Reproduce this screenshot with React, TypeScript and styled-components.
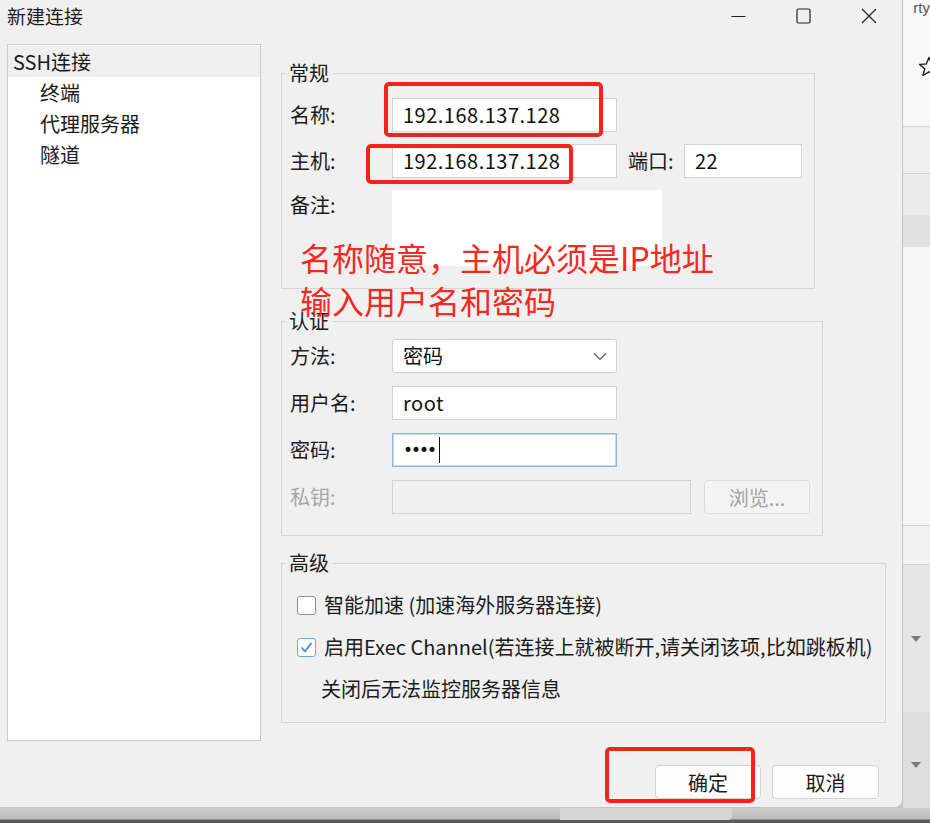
import React from "react";
import styled, { createGlobalStyle } from "styled-components";

const FONT = `"Noto Sans CJK SC", "Microsoft YaHei", "Noto Sans", sans-serif`;

const Global = createGlobalStyle`
  html, body { margin: 0; padding: 0; }
  body {
    width: 930px;
    height: 823px;
    overflow: hidden;
    background: #c4c4c4;
    font-family: ${FONT};
  }
  * { box-sizing: border-box; }
`;

const Page = styled.div`
  display: grid;
  grid-template-columns: 903px 27px;
  grid-template-rows: 808px 15px;
  width: 930px;
  height: 823px;
  background: #c6c6c6;
`;

/* ---------- dialog ---------- */

const Dialog = styled.div`
  position: relative;
  display: flex;
  flex-direction: column;
  background: #f0f0f0;
  border-right: 1px solid #c2c2c2;
  border-bottom: 1px solid #c2c2c2;
  border-bottom-right-radius: 8px;
  color: #1b1b1b;
`;

const TitleBar = styled.div`
  display: flex;
  align-items: center;
  justify-content: space-between;
  height: 32px;
  padding-left: 7px;
`;

const Title = styled.span`
  font-size: 19px;
  line-height: 32px;
  color: #1b1b1b;
`;

const WinControls = styled.div`
  display: flex;
  align-self: stretch;
`;

const WinButton = styled.div<{ $w: number }>`
  width: ${(p) => p.$w}px;
  display: flex;
  align-items: center;
  justify-content: center;
`;

const Body = styled.div`
  display: flex;
  align-items: flex-start;
  padding: 12px 0 0 7px;
`;

const Tree = styled.div`
  width: 254px;
  height: 697px;
  flex: none;
  background: #ffffff;
  border: 1px solid #cbcbcb;
  padding-top: 1px;
`;

const TreeItem = styled.div<{ $indent: number; $selected?: boolean }>`
  height: 31px;
  line-height: 31px;
  padding-left: ${(p) => p.$indent}px;
  font-size: 20px;
  color: #1b1b1b;
  background: ${(p) => (p.$selected ? "#efefef" : "transparent")};
`;

const Main = styled.div`
  position: relative;
  display: flex;
  flex-direction: column;
  margin-left: 20px;
  padding-top: 18px;
`;

const Group = styled.fieldset<{ $w: number; $h: number; $mt: number; $pt: number; $gap: number }>`
  margin: ${(p) => p.$mt}px 0 0 0;
  width: ${(p) => p.$w}px;
  height: ${(p) => p.$h}px;
  min-width: 0;
  border: 1px solid #d6d6d6;
  padding: ${(p) => p.$pt}px 8px 0 8px;
  display: flex;
  flex-direction: column;
  gap: ${(p) => p.$gap}px;
`;

const Legend = styled.legend`
  font-size: 20px;
  line-height: 22px;
  padding: 0 4px;
  margin-left: -5px;
  color: #1b1b1b;
`;

const Row = styled.div<{ $top?: boolean }>`
  display: flex;
  align-items: ${(p) => (p.$top ? "flex-start" : "center")};
`;

const FieldLabel = styled.span<{ $w?: number; $disabled?: boolean; $ml?: number }>`
  width: ${(p) => p.$w ?? 102}px;
  margin-left: ${(p) => p.$ml ?? 0}px;
  flex: none;
  font-size: 20px;
  line-height: 30px;
  color: ${(p) => (p.$disabled ? "#a6a6a6" : "#1b1b1b")};
`;

const Field = styled.div<{ $w: number; $h?: number; $disabled?: boolean; $focus?: boolean; $radius?: number; $bordered?: boolean }>`
  position: relative;
  display: flex;
  align-items: center;
  width: ${(p) => p.$w}px;
  height: ${(p) => p.$h ?? 34}px;
  flex: none;
  padding: 0 10px;
  background: ${(p) => (p.$disabled ? "#f0f0f0" : "#ffffff")};
  border: 1px solid
    ${(p) => (p.$bordered === false ? "transparent" : p.$focus ? "#8fb6e0" : "#d2d2d2")};
  box-shadow: ${(p) => (p.$focus ? "inset 0 0 0 1px #c6dbf1" : "none")};
  border-radius: ${(p) => p.$radius ?? 0}px;
  font-size: 20px;
  line-height: 32px;
  letter-spacing: 0.5px;
  color: #111111;
`;

const SelectField = styled(Field)`
  justify-content: space-between;
  padding-right: 9px;
  letter-spacing: 0;
`;

const Dots = styled.span`
  font-family: "DejaVu Sans", sans-serif;
  font-size: 17px;
  letter-spacing: -2px;
  color: #111;
`;

const Caret = styled.span`
  display: inline-block;
  width: 1px;
  height: 26px;
  background: #111;
  margin-left: 4px;
`;

const BrowseButton = styled.div`
  width: 106px;
  height: 34px;
  margin-left: 13px;
  flex: none;
  display: flex;
  align-items: center;
  justify-content: center;
  background: #f3f3f3;
  border: 1px solid #dcdcdc;
  border-radius: 4px;
  font-size: 20px;
  color: #a3a3a3;
`;

const CheckRow = styled.label`
  display: flex;
  align-items: center;
  gap: 8px;
  padding-left: 7px;
  font-size: 20px;
  line-height: 30px;
  color: #1b1b1b;
`;

const Box = styled.span<{ $checked?: boolean }>`
  width: 19px;
  height: 19px;
  flex: none;
  display: flex;
  align-items: center;
  justify-content: center;
  background: #fff;
  border: 1px solid ${(p) => (p.$checked ? "#6aa6e4" : "#8f8f8f")};
  border-radius: 3px;
`;

const Note = styled.div`
  padding-left: 31px;
  font-size: 20px;
  line-height: 30px;
  color: #1b1b1b;
`;

const Footer = styled.div`
  display: flex;
  justify-content: flex-end;
  gap: 11px;
  margin-top: 24px;
  padding-right: 23px;
`;

const Button = styled.div<{ $w: number }>`
  position: relative;
  width: ${(p) => p.$w}px;
  height: 34px;
  display: flex;
  align-items: center;
  justify-content: center;
  background: #fdfdfd;
  border: 1px solid #d3d3d3;
  border-radius: 4px;
  font-size: 20px;
  color: #1b1b1b;
`;

/* ---------- annotations (overlay) ---------- */

const Anchor = styled.div`
  position: relative;
  display: flex;
  flex: none;
`;

const RedFrame = styled.span<{ $t: number; $r: number; $b: number; $l: number }>`
  position: absolute;
  top: ${(p) => p.$t}px;
  right: ${(p) => p.$r}px;
  bottom: ${(p) => p.$b}px;
  left: ${(p) => p.$l}px;
  border: 4px solid #f5231c;
  border-radius: 5px;
  pointer-events: none;
`;

const RedNote = styled.div`
  position: absolute;
  left: 19px;
  top: 192px;
  font-size: 32px;
  line-height: 43px;
  color: #f52a1f;
  white-space: nowrap;
  pointer-events: none;
`;

/* ---------- background app ---------- */

const BackApp = styled.div`
  display: flex;
  flex-direction: column;
  overflow: hidden;
  background: #f6f6f6;
  box-shadow: inset 3px 0 4px -2px rgba(0, 0, 0, 0.12);
`;

const BackBand = styled.div<{ $h: number; $bg: string; $line?: boolean }>`
  position: relative;
  height: ${(p) => p.$h}px;
  flex: none;
  background: ${(p) => p.$bg};
  border-top: ${(p) => (p.$line ? "1px solid #d2d2d2" : "none")};
  display: flex;
  align-items: center;
  justify-content: flex-end;
`;

const BackText = styled.span`
  font-family: "Liberation Sans", sans-serif;
  font-size: 15px;
  line-height: 14px;
  color: #555;
  margin-top: -14px;
  white-space: nowrap;
`;

const Arrow = styled.span`
  width: 0;
  height: 0;
  margin-right: 9px;
  border-left: 5px solid transparent;
  border-right: 5px solid transparent;
  border-top: 6px solid #7a7a7a;
`;

const Taskbar = styled.div`
  grid-column: 1 / -1;
  display: flex;
  background: linear-gradient(#cdcdcd 0, #bdbdbd 11px, #5a5a5a 12px, #5a5a5a 100%);
`;

const TaskTab = styled.div`
  width: 172px;
  height: 12px;
  margin-left: 560px;
  background: #d6d6d6;
  border-bottom-right-radius: 4px;
`;

function Check() {
  return (
    <svg width="13" height="13" viewBox="0 0 13 13">
      <polyline points="2,7 5,10.5 11,2.5" fill="none" stroke="#3d8de0" strokeWidth="1.8" strokeLinecap="round" strokeLinejoin="round" />
    </svg>
  );
}

export default function App() {
  return (
    <>
      <Global />
      <Page>
        <Dialog>
          <TitleBar>
            <Title>新建连接</Title>
            <WinControls>
              <WinButton $w={64}>
                <svg width="15" height="15" viewBox="0 0 15 15">
                  <line x1="0.5" y1="7.5" x2="14.5" y2="7.5" stroke="#222" strokeWidth="1" />
                </svg>
              </WinButton>
              <WinButton $w={66}>
                <svg width="15" height="16" viewBox="0 0 15 16">
                  <rect x="1" y="1" width="13" height="14" rx="1.5" fill="none" stroke="#222" strokeWidth="1.2" />
                </svg>
              </WinButton>
              <WinButton $w={66}>
                <svg width="16" height="16" viewBox="0 0 16 16">
                  <path d="M1 1 L15 15 M15 1 L1 15" stroke="#222" strokeWidth="1.2" />
                </svg>
              </WinButton>
            </WinControls>
          </TitleBar>

          <Body>
            <Tree>
              <TreeItem $indent={5} $selected>SSH连接</TreeItem>
              <TreeItem $indent={32}>终端</TreeItem>
              <TreeItem $indent={32}>代理服务器</TreeItem>
              <TreeItem $indent={32}>隧道</TreeItem>
            </Tree>

            <Main>
              <Group $w={534} $h={227} $mt={0} $pt={14} $gap={12}>
                <Legend>常规</Legend>
                <Row>
                  <FieldLabel>名称:</FieldLabel>
                  <Anchor>
                    <Field $w={225}>192.168.137.128</Field>
                    <RedFrame $t={-16} $r={14} $b={-5} $l={-8} />
                  </Anchor>
                </Row>
                <Row>
                  <FieldLabel>主机:</FieldLabel>
                  <Anchor>
                    <Field $w={225}>192.168.137.128</Field>
                    <RedFrame $t={0} $r={44} $b={-6} $l={-26} />
                  </Anchor>
                  <FieldLabel $w={56} $ml={11}>端口:</FieldLabel>
                  <Field $w={118}>22</Field>
                </Row>
                <Row $top>
                  <FieldLabel>备注:</FieldLabel>
                  <Field $w={270} $h={76} $bordered={false} />
                </Row>
              </Group>

              <Group $w={542} $h={226} $mt={21} $pt={7} $gap={13}>
                <Legend>认证</Legend>
                <Row>
                  <FieldLabel>方法:</FieldLabel>
                  <SelectField $w={225} $radius={3}>
                    <span>密码</span>
                    <svg width="14" height="9" viewBox="0 0 14 9">
                      <polyline points="1,1.5 7,7.5 13,1.5" fill="none" stroke="#555" strokeWidth="1.2" />
                    </svg>
                  </SelectField>
                </Row>
                <Row>
                  <FieldLabel>用户名:</FieldLabel>
                  <Field $w={225}>root</Field>
                </Row>
                <Row>
                  <FieldLabel>密码:</FieldLabel>
                  <Field $w={225} $focus>
                    <Dots>••••</Dots>
                    <Caret />
                  </Field>
                </Row>
                <Row>
                  <FieldLabel $disabled>私钥:</FieldLabel>
                  <Field $w={299} $disabled />
                  <BrowseButton>浏览...</BrowseButton>
                </Row>
              </Group>

              <Group $w={605} $h={171} $mt={16} $pt={16} $gap={12}>
                <Legend>高级</Legend>
                <CheckRow>
                  <Box />
                  智能加速 (加速海外服务器连接)
                </CheckRow>
                <CheckRow>
                  <Box $checked>
                    <Check />
                  </Box>
                  启用Exec Channel(若连接上就被断开,请关闭该项,比如跳板机)
                </CheckRow>
                <Note>关闭后无法监控服务器信息</Note>
              </Group>

              <RedNote>
                名称随意，主机必须是IP地址
                <br />
                输入用户名和密码
              </RedNote>
            </Main>
          </Body>

          <Footer>
            <Anchor>
              <Button $w={106}>确定</Button>
              <RedFrame $t={-18} $r={6} $b={-4} $l={-50} />
            </Anchor>
            <Button $w={107}>取消</Button>
          </Footer>
        </Dialog>

        <BackApp>
          <BackBand $h={30} $bg="#f8f8f8">
            <BackText>rty</BackText>
          </BackBand>
          <BackBand $h={96} $bg="#f8f8f8">
            <svg width="22" height="22" viewBox="0 0 22 22" style={{ marginRight: -10, marginTop: -22 }}>
              <polygon
                points="11,1.5 13.8,8 20.5,8.4 15.3,12.8 17,19.5 11,15.8 5,19.5 6.7,12.8 1.5,8.4 8.2,8"
                fill="none"
                stroke="#222"
                strokeWidth="1.4"
                strokeLinejoin="round"
              />
            </svg>
          </BackBand>
          <BackBand $h={47} $bg="#eeeeee" $line />
          <BackBand $h={42} $bg="#ebebeb" $line />
          <BackBand $h={32} $bg="#e0e0e0" />
          <BackBand $h={278} $bg="#f6f6f6" />
          <BackBand $h={39} $bg="#f1f1f1" $line />
          <BackBand $h={148} $bg="#e6e6e6" $line>
            <Arrow />
          </BackBand>
          <BackBand $h={106} $bg="#dedede">
            <Arrow />
          </BackBand>
        </BackApp>

        <Taskbar>
          <TaskTab />
        </Taskbar>
      </Page>
    </>
  );
}
